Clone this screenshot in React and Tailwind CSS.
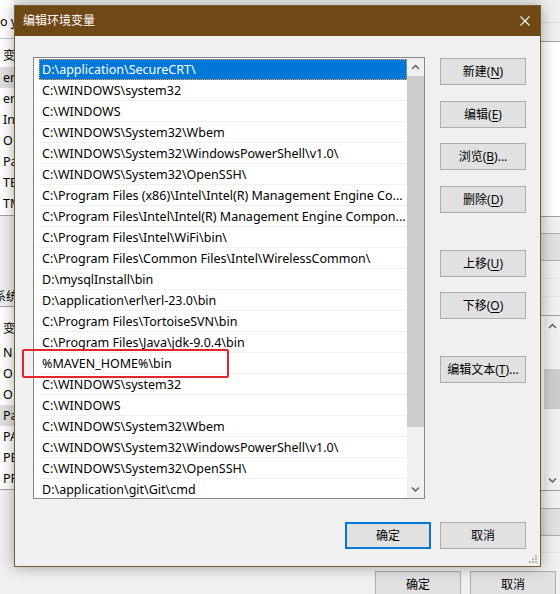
import React from 'react';

const paths = [
  'D:\\application\\SecureCRT\\',
  'C:\\WINDOWS\\system32',
  'C:\\WINDOWS',
  'C:\\WINDOWS\\System32\\Wbem',
  'C:\\WINDOWS\\System32\\WindowsPowerShell\\v1.0\\',
  'C:\\WINDOWS\\System32\\OpenSSH\\',
  'C:\\Program Files (x86)\\Intel\\Intel(R) Management Engine Co...',
  'C:\\Program Files\\Intel\\Intel(R) Management Engine Compon...',
  'C:\\Program Files\\Intel\\WiFi\\bin\\',
  'C:\\Program Files\\Common Files\\Intel\\WirelessCommon\\',
  'D:\\mysqlInstall\\bin',
  'D:\\application\\erl\\erl-23.0\\bin',
  'C:\\Program Files\\TortoiseSVN\\bin',
  'C:\\Program Files\\Java\\jdk-9.0.4\\bin',
  '%MAVEN_HOME%\\bin',
  'C:\\WINDOWS\\system32',
  'C:\\WINDOWS',
  'C:\\WINDOWS\\System32\\Wbem',
  'C:\\WINDOWS\\System32\\WindowsPowerShell\\v1.0\\',
  'C:\\WINDOWS\\System32\\OpenSSH\\',
  'D:\\application\\git\\Git\\cmd',
];

const userVars = ['er', 'er', 'In', 'O', 'Pa', 'TE', 'TM'];
const sysVars = ['N', 'O', 'O', 'Pa', 'PA', 'PE', 'PF'];

function Chevron({ down }) {
  return (
    <svg width="9" height="6" viewBox="0 0 9 6" className="block">
      <polyline
        points={down ? '1,1.5 4.5,5 8,1.5' : '1,5 4.5,1.5 8,5'}
        fill="none"
        stroke="#606060"
        strokeWidth="1.5"
      />
    </svg>
  );
}

function WinButton({ label, hotkey, tail, primary, className = '' }) {
  return (
    <div
      className={`flex h-[27px] w-[86px] items-center justify-center bg-[#e1e1e1] text-[12px] text-black ${
        primary ? 'border-2 border-[#0078d7]' : 'border border-[#adadad]'
      } ${className}`}
    >
      <span>
        {label}
        {hotkey && (
          <>
            (<span className="underline underline-offset-2">{hotkey}</span>)
          </>
        )}
        {tail}
      </span>
    </div>
  );
}

function LeftStrip() {
  return (
    <div className="flex w-[14px] flex-col overflow-hidden whitespace-nowrap text-[12.5px] text-black">
      <div className="h-[39px] border-b border-[#c8c8c8] bg-white pt-[13px] leading-[18px]">o y</div>
      <div className="h-[177px] border-b border-[#a0a0a0] bg-white">
        <div className="h-[28px] pl-[3px] pt-[5px] leading-[23px]">变量</div>
        {userVars.map((v, i) => (
          <div key={i} className={`h-[21px] pl-[3px] leading-[21px] ${i === 0 ? 'bg-[#e0e0e0]' : ''}`}>
            {v}
          </div>
        ))}
      </div>
      <div className="flex h-[90px] items-end">
        <span className="-ml-[6px] text-[12px] leading-[18px]">系统变量(S)</span>
      </div>
      <div className="h-[184px] border-y border-[#a0a0a0] bg-white">
        <div className="flex h-[35px] items-center pl-[3px] pt-[10px]">变量</div>
        {sysVars.map((v, i) => (
          <div key={i} className={`h-[21px] pl-[3px] leading-[21px] ${i === 3 ? 'bg-[#e0e0e0]' : ''}`}>
            {v}
          </div>
        ))}
      </div>
    </div>
  );
}

function RightStrip() {
  return (
    <div className="flex w-[19px] flex-col">
      <div className="h-[23px] border-b border-[#dcdcdc]" />
      <div className="h-[19px] border-b border-[#a0a0a0]" />
      <div className="h-[175px] border-b border-[#a0a0a0] bg-white" />
      <div className="h-[17px] border-b border-[#adadad]" />
      <div className="h-[27px] border-b border-[#adadad] bg-[#e1e1e1]" />
      <div className="h-[18px] border-b border-[#e3e3e3]" />
      <div className="h-[18px] border-b border-[#e3e3e3]" />
      <div className="h-[19px] border-b border-[#a0a0a0]" />
      <div className="flex h-[175px] border-b border-[#a0a0a0]">
        <div className="w-[3px] bg-white" />
        <div className="flex flex-1 flex-col bg-[#f0f0f0]">
          <div className="flex h-[20px] items-center justify-center">
            <Chevron />
          </div>
          <div className="mt-[33px] h-[40px] bg-[#cdcdcd]" />
          <div className="flex-1" />
          <div className="flex h-[20px] items-center justify-center">
            <Chevron down />
          </div>
        </div>
      </div>
      <div className="h-[18px] border-b border-[#adadad]" />
      <div className="h-[27px] border-b border-[#adadad] bg-[#e1e1e1]" />
      <div className="h-[17px] border-b border-[#e3e3e3]" />
    </div>
  );
}

function PathList() {
  return (
    <div className="flex h-[442px] w-[392px] overflow-hidden border border-[#828790] bg-white pl-[5px] pt-px">
      <div className="flex-1 overflow-hidden">
        {paths.map((p, i) => (
          <div
            key={i}
            className={`h-[21px] truncate pl-[3px] pt-px text-[12.5px] leading-[20px] ${
              i === 0
                ? 'bg-[#0078d7] text-white outline-1 -outline-offset-1 outline-dotted outline-[#ff9f40]'
                : 'border-b border-[#f0f0f0] text-black'
            }`}
          >
            {p}
          </div>
        ))}
      </div>
      <div className="flex w-[17px] flex-col bg-[#f0f0f0] -mt-px">
        <div className="flex h-[18px] items-center justify-center">
          <Chevron />
        </div>
        <div className="h-[351px] bg-[#cdcdcd]" />
        <div className="flex-1" />
        <div className="flex h-[18px] items-center justify-center">
          <Chevron down />
        </div>
      </div>
    </div>
  );
}

function Dialog() {
  return (
    <div className="absolute left-[14px] top-[5px] flex h-[562px] w-[527px] flex-col border border-[#7d5c2c] bg-[#f0f0f0] shadow-[0_0_14px_rgba(0,0,0,0.35)]">
      <div className="flex h-[30px] shrink-0 items-center justify-between bg-[#6f4816] pl-[8px] pr-[10px]">
        <span className="text-[12px] text-white">编辑环境变量</span>
        <svg width="10" height="10" viewBox="0 0 10 10" className="mt-[-1px]">
          <path d="M0.5 0.5 L9.5 9.5 M9.5 0.5 L0.5 9.5" stroke="#ffffff" strokeWidth="1.1" />
        </svg>
      </div>
      <div className="flex flex-col pl-[18px] pt-[21px]">
        <div className="flex">
          <PathList />
          <div className="ml-[15px] flex flex-col">
            <WinButton label="新建" hotkey="N" className="mt-px" />
            <WinButton label="编辑" hotkey="E" className="mt-[16px]" />
            <WinButton label="浏览" hotkey="B" tail="..." className="mt-[15px]" />
            <WinButton label="删除" hotkey="D" className="mt-[16px]" />
            <WinButton label="上移" hotkey="U" className="mt-[37px]" />
            <WinButton label="下移" hotkey="O" className="mt-[15px]" />
            <WinButton label="编辑文本" hotkey="T" tail="..." className="mt-[37px]" />
          </div>
        </div>
        <div className="mt-[23px] flex justify-end gap-[9px] pr-[14px]">
          <WinButton label="确定" primary />
          <WinButton label="取消" />
        </div>
      </div>
      <svg width="10" height="10" viewBox="0 0 10 10" className="absolute bottom-[2px] right-[2px]">
        <rect x="7" y="1" width="2" height="2" fill="#b9b9b9" />
        <rect x="4" y="4" width="2" height="2" fill="#b9b9b9" />
        <rect x="7" y="4" width="2" height="2" fill="#b9b9b9" />
        <rect x="1" y="7" width="2" height="2" fill="#b9b9b9" />
        <rect x="4" y="7" width="2" height="2" fill="#b9b9b9" />
        <rect x="7" y="7" width="2" height="2" fill="#b9b9b9" />
      </svg>
    </div>
  );
}

export default function App() {
  return (
    <div className="relative h-[594px] w-[560px] overflow-hidden bg-[#f0f0f0] font-['Noto_Sans','Noto_Sans_CJK_SC',sans-serif]">
      <div className="flex h-[567px]">
        <LeftStrip />
        <div className="flex-1" />
        <RightStrip />
      </div>
      <div className="flex justify-end gap-[9px] pr-[4px] pt-[4px]">
        <WinButton label="确定" />
        <WinButton label="取消" />
      </div>
      <Dialog />
      <div className="absolute left-[22px] top-[349px] h-[29px] w-[207px] rounded-[2px] border-2 border-[#e3262b]" />
    </div>
  );
}
